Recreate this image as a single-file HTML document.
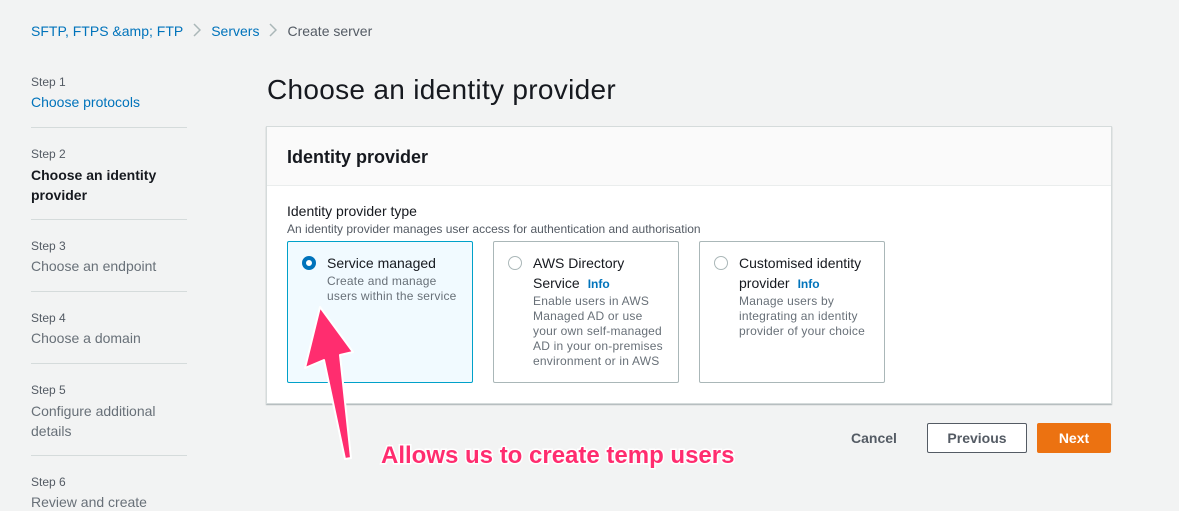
<!DOCTYPE html>
<html><head><meta charset="utf-8"><style>
*{box-sizing:border-box;margin:0;padding:0}
body{width:1179px;height:511px;background:#f2f3f3;font-family:"Liberation Sans",sans-serif;position:relative;overflow:hidden;color:#16191f}
.a{position:absolute;white-space:nowrap}
.link{color:#0073bb}
.sl{font-size:12px;color:#545b64}
.sv{font-size:14px;color:#687078}
.hr{position:absolute;left:31px;width:156px;height:1px;background:#d5dbdb}
.tile{position:absolute;top:241px;width:186px;height:142px;border:1px solid #aab7b8;background:#fff;border-radius:2px}
.tile.sel{border-color:#00a1c9;background:#f1faff}
.rad{position:absolute;left:14px;top:14px;width:14px;height:14px;border-radius:50%;border:1px solid #aab7b8;background:#fff}
.sel .rad{border:4px solid #0073bb}
.tt{position:absolute;left:39px;top:11px;font-size:14px;line-height:20px;color:#16191f}
.td{font-size:12px;line-height:15px;color:#687078;letter-spacing:.2px}
.info{color:#0073bb;font-weight:bold;font-size:12px;margin-left:8px}
.chev{display:inline-block;margin:0 10px;vertical-align:-1px}
</style></head><body>
<div class="a" style="left:31px;top:23px;font-size:14px"><span class="link">SFTP, FTPS &amp;amp; FTP</span><svg class="chev" width="8" height="14"><path d="M1 1 L7 7 L1 13" fill="none" stroke="#aab7b8" stroke-width="1.5"/></svg><span class="link">Servers</span><svg class="chev" width="8" height="14"><path d="M1 1 L7 7 L1 13" fill="none" stroke="#aab7b8" stroke-width="1.5"/></svg><span style="color:#545b64">Create server</span></div>

<div class="a sl" style="left:31px;top:75px">Step 1</div>
<div class="a link" style="left:31px;top:94px;font-size:14px">Choose protocols</div>
<div class="hr" style="top:127px"></div>
<div class="a sl" style="left:31px;top:147px">Step 2</div>
<div class="a" style="left:31px;top:165px;font-size:14px;font-weight:bold;line-height:20px">Choose an identity<br>provider</div>
<div class="hr" style="top:219px"></div>
<div class="a sl" style="left:31px;top:239px">Step 3</div>
<div class="a sv" style="left:31px;top:258px">Choose an endpoint</div>
<div class="hr" style="top:291px"></div>
<div class="a sl" style="left:31px;top:311px">Step 4</div>
<div class="a sv" style="left:31px;top:330px">Choose a domain</div>
<div class="hr" style="top:363px"></div>
<div class="a sl" style="left:31px;top:383px">Step 5</div>
<div class="a sv" style="left:31px;top:401px;line-height:20px">Configure additional<br>details</div>
<div class="hr" style="top:455px"></div>
<div class="a sl" style="left:31px;top:475px">Step 6</div>
<div class="a sv" style="left:31px;top:494px">Review and create</div>

<div class="a" style="left:267px;top:74px;font-size:28px;color:#16191f;letter-spacing:.3px">Choose an identity provider</div>

<div class="a" style="left:266px;top:126px;width:846px;height:278px;background:#fff;border:1px solid #d5dbdb;box-shadow:0 1px 1px rgba(0,28,36,.3)">
 <div style="height:59px;background:#fafafa;border-bottom:1px solid #eaeded;padding:20px 20px;font-size:18px;font-weight:bold">Identity provider</div>
</div>
<div class="a" style="left:287px;top:203px;font-size:14px">Identity provider type</div>
<div class="a" style="left:287px;top:222px;font-size:12px;color:#545b64">An identity provider manages user access for authentication and authorisation</div>

<div class="tile sel" style="left:287px"><div class="rad"></div><div class="tt">Service managed<div class="td" style="margin-top:1px">Create and manage<br>users within the service</div></div></div>
<div class="tile" style="left:493px"><div class="rad"></div><div class="tt">AWS Directory<br>Service<span class="info">Info</span><div class="td" style="margin-top:0">Enable users in AWS<br>Managed AD or use<br>your own self-managed<br>AD in your on-premises<br>environment or in AWS</div></div></div>
<div class="tile" style="left:699px"><div class="rad"></div><div class="tt">Customised identity<br>provider<span class="info">Info</span><div class="td" style="margin-top:0">Manage users by<br>integrating an identity<br>provider of your choice</div></div></div>

<div class="a" style="left:851px;top:430px;font-size:14px;font-weight:bold;color:#545b64">Cancel</div>
<div class="a" style="left:927px;top:423px;width:100px;height:30px;border:1px solid #545b64;background:#fff;border-radius:2px;font-size:14px;font-weight:bold;color:#545b64;text-align:center;line-height:28px">Previous</div>
<div class="a" style="left:1037px;top:423px;width:74px;height:30px;background:#ec7211;border-radius:2px;font-size:14px;font-weight:bold;color:#fff;text-align:center;line-height:30px">Next</div>

<svg class="a" style="left:0;top:0" width="1179" height="511">
<path d="M320 307 L353 352 L340 355 L351 458 L345 459 L324 360 L305 368 Z" fill="#ff2d6f" stroke="#fff" stroke-width="2" stroke-linejoin="round"/>
<text x="381" y="463" font-family="Liberation Sans,sans-serif" font-weight="bold" font-size="24" fill="#ff2d6f" stroke="#fff" stroke-width="3" paint-order="stroke">Allows us to create temp users</text>
</svg>
</body></html>
